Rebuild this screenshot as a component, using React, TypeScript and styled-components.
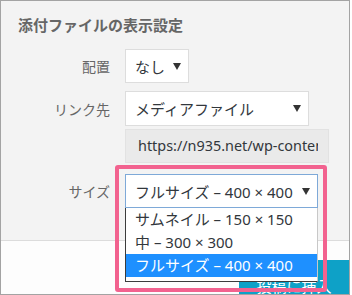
import styled, { createGlobalStyle } from "styled-components";

const GlobalStyle = createGlobalStyle`
  html, body {
    margin: 0;
    padding: 0;
    background: #fff;
  }
  body {
    font-family: "Noto Sans", "Noto Sans CJK JP", sans-serif;
  }
`;

const Frame = styled.div`
  position: relative;
  width: 350px;
  height: 295px;
  box-sizing: border-box;
  border: 1px solid #a3a3a3;
  overflow: hidden;
  display: flex;
  flex-direction: column;
  background: #fdfdfd;
`;

const Panel = styled.div`
  height: 240px;
  box-sizing: border-box;
  flex-shrink: 0;
  background: #f3f3f3;
  border-bottom: 1px solid #dcdcdc;
  padding-top: 14px;
`;

const Title = styled.h2`
  margin: 0 0 0 17px;
  font-size: 15px;
  line-height: 20px;
  font-weight: 700;
  color: #666;
`;

const Row = styled.div<{ $mt: number }>`
  display: grid;
  grid-template-columns: 109px 1fr;
  column-gap: 15px;
  align-items: center;
  margin-top: ${(p) => p.$mt}px;
`;

const Label = styled.span`
  text-align: right;
  font-size: 14px;
  color: #666;
`;

const Field = styled.div`
  position: relative;
`;

const SelectBox = styled.div<{ $w: number; $h?: number; $focus?: boolean }>`
  width: ${(p) => p.$w}px;
  height: ${(p) => p.$h ?? 34}px;
  box-sizing: border-box;
  display: flex;
  align-items: center;
  justify-content: space-between;
  padding: 0 7px 0 9px;
  background: #fff;
  border: 1px solid ${(p) => (p.$focus ? "#7ea9d8" : "#dddddd")};
  font-size: 15px;
  color: #32373c;
  white-space: nowrap;
`;

const UrlBox = styled.div`
  width: 204px;
  height: 34px;
  box-sizing: border-box;
  padding: 0 10px 0 12px;
  background: #eaeaea;
  border: 1px solid #e2e2e2;
  font-size: 14.4px;
  line-height: 32px;
  color: #32373c;
  white-space: nowrap;
  overflow: hidden;
`;

const UrlText = styled.div`
  overflow: hidden;
`;

const Arrow = () => (
  <svg width="8" height="7" viewBox="0 0 8 7">
    <polygon points="0,0 8,0 4,7" fill="#333" />
  </svg>
);

const OptionList = styled.ul`
  position: absolute;
  left: 0;
  top: 100%;
  width: 193px;
  box-sizing: border-box;
  margin: 0;
  padding: 0 0 4px;
  list-style: none;
  background: #fff;
  border: 1px solid #3c3c3c;
  border-top: none;
  border-right-color: #c8c8c8;
  z-index: 2;
`;

const Option = styled.li<{ $selected?: boolean }>`
  height: 23px;
  line-height: 23px;
  padding-left: 9px;
  font-size: 15px;
  white-space: nowrap;
  color: ${(p) => (p.$selected ? "#fff" : "#32373c")};
  background: ${(p) => (p.$selected ? "#1e90ff" : "transparent")};
`;

const Footer = styled.div`
  flex: 1;
  display: flex;
  justify-content: flex-end;
  padding-top: 19px;
`;

const PrimaryButton = styled.button`
  width: 110px;
  height: 50px;
  border: none;
  border-radius: 2px 0 0 0;
  background: #0ea1c7;
  color: #fff;
  font-family: inherit;
  font-size: 15px;
  padding: 0;
`;

const Highlight = styled.div`
  position: absolute;
  left: 114px;
  top: 164px;
  width: 212px;
  height: 127px;
  box-sizing: border-box;
  border: 4px solid #f2628f;
  border-radius: 3px;
  pointer-events: none;
  z-index: 3;
`;

const sizeOptions = [
  "サムネイル – 150 × 150",
  "中 – 300 × 300",
  "フルサイズ – 400 × 400",
];

export default function App() {
  return (
    <>
      <GlobalStyle />
      <Frame>
        <Panel>
          <Title>添付ファイルの表示設定</Title>
          <Row $mt={14}>
            <Label>配置</Label>
            <SelectBox $w={64}>
              なし
              <Arrow />
            </SelectBox>
          </Row>
          <Row $mt={8}>
            <Label>リンク先</Label>
            <SelectBox $w={184} $h={35}>
              メディアファイル
              <Arrow />
            </SelectBox>
          </Row>
          <Row $mt={3}>
            <span />
            <UrlBox>
              <UrlText>https://n935.net/wp-content/uploads/2017/sample.png</UrlText>
            </UrlBox>
          </Row>
          <Row $mt={11}>
            <Label>サイズ</Label>
            <Field>
              <SelectBox $w={193} $focus>
                フルサイズ – 400 × 400
                <Arrow />
              </SelectBox>
              <OptionList>
                {sizeOptions.map((o, i) => (
                  <Option key={o} $selected={i === sizeOptions.length - 1}>
                    {o}
                  </Option>
                ))}
              </OptionList>
            </Field>
          </Row>
        </Panel>
        <Footer>
          <PrimaryButton>投稿に挿入</PrimaryButton>
        </Footer>
        <Highlight />
      </Frame>
    </>
  );
}
